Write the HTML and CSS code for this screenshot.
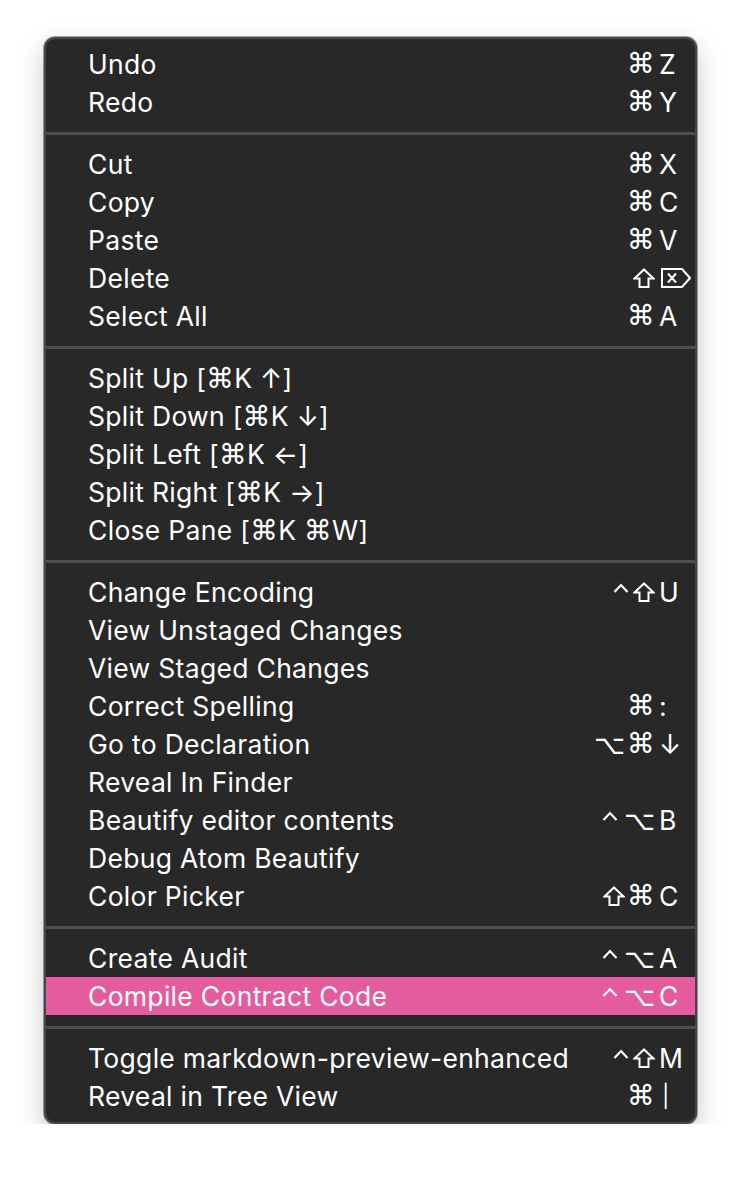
FILE: index.html
```html
<!DOCTYPE html>
<html>
<head>
<meta charset="utf-8">
<link rel="stylesheet" href="styles.css">
</head>
<body>
<div class="menu">
  <div class="row"><span class="label">Undo</span><span class="mods"><span class="cmd">⌘</span></span><span class="key">Z</span></div>
  <div class="row"><span class="label">Redo</span><span class="mods"><span class="cmd">⌘</span></span><span class="key">Y</span></div>
  <div class="sep"></div>
  <div class="row"><span class="label">Cut</span><span class="mods"><span class="cmd">⌘</span></span><span class="key">X</span></div>
  <div class="row"><span class="label">Copy</span><span class="mods"><span class="cmd">⌘</span></span><span class="key">C</span></div>
  <div class="row"><span class="label">Paste</span><span class="mods"><span class="cmd">⌘</span></span><span class="key">V</span></div>
  <div class="row"><span class="label">Delete</span><span class="mods"><svg class="shift" viewBox="0 0 22 20" aria-label="⇧"><path d="M11 1.5 L20.5 10.5 L15.5 10.5 L15.5 19 L6.5 19 L6.5 10.5 L1.5 10.5 Z"/></svg></span><span class="key"><svg class="del" viewBox="0 0 30 20" aria-label="⌦"><path d="M1 1 H21 L29 10 L21 19 H1 Z"/><path d="M7 5.5 L15 14.5 M15 5.5 L7 14.5"/></svg></span></div>
  <div class="row"><span class="label">Select All</span><span class="mods"><span class="cmd">⌘</span></span><span class="key">A</span></div>
  <div class="sep"></div>
  <div class="row"><span class="label">Split Up [<span class="g">⌘</span>K ↑]</span></div>
  <div class="row"><span class="label">Split Down [<span class="g">⌘</span>K ↓]</span></div>
  <div class="row"><span class="label">Split Left [<span class="g">⌘</span>K ←]</span></div>
  <div class="row"><span class="label">Split Right [<span class="g">⌘</span>K →]</span></div>
  <div class="row"><span class="label">Close Pane [<span class="g">⌘</span>K <span class="g">⌘</span>W]</span></div>
  <div class="sep"></div>
  <div class="row"><span class="label">Change Encoding</span><span class="mods"><svg class="ctrl" viewBox="0 0 16 20" aria-label="⌃"><path d="M1.5 10 L8 3 L14.5 10"/></svg><svg class="shift" viewBox="0 0 22 20" aria-label="⇧"><path d="M11 1.5 L20.5 10.5 L15.5 10.5 L15.5 19 L6.5 19 L6.5 10.5 L1.5 10.5 Z"/></svg></span><span class="key">U</span></div>
  <div class="row"><span class="label">View Unstaged Changes</span></div>
  <div class="row"><span class="label">View Staged Changes</span></div>
  <div class="row"><span class="label">Correct Spelling</span><span class="mods"><span class="cmd">⌘</span></span><span class="key">:</span></div>
  <div class="row"><span class="label">Go to Declaration</span><span class="mods"><span class="opt">⌥</span><span class="cmd">⌘</span></span><span class="key">↓</span></div>
  <div class="row"><span class="label">Reveal In Finder</span></div>
  <div class="row"><span class="label">Beautify editor contents</span><span class="mods"><svg class="ctrl" viewBox="0 0 16 20" aria-label="⌃"><path d="M1.5 10 L8 3 L14.5 10"/></svg><span class="opt">⌥</span></span><span class="key">B</span></div>
  <div class="row"><span class="label">Debug Atom Beautify</span></div>
  <div class="row"><span class="label">Color Picker</span><span class="mods"><svg class="shift" viewBox="0 0 22 20" aria-label="⇧"><path d="M11 1.5 L20.5 10.5 L15.5 10.5 L15.5 19 L6.5 19 L6.5 10.5 L1.5 10.5 Z"/></svg><span class="cmd">⌘</span></span><span class="key">C</span></div>
  <div class="sep"></div>
  <div class="row"><span class="label">Create Audit</span><span class="mods"><svg class="ctrl" viewBox="0 0 16 20" aria-label="⌃"><path d="M1.5 10 L8 3 L14.5 10"/></svg><span class="opt">⌥</span></span><span class="key">A</span></div>
  <div class="row active"><span class="label">Compile Contract Code</span><span class="mods"><svg class="ctrl" viewBox="0 0 16 20" aria-label="⌃"><path d="M1.5 10 L8 3 L14.5 10"/></svg><span class="opt">⌥</span></span><span class="key">C</span></div>
  <div class="sep"></div>
  <div class="row"><span class="label">Toggle markdown-preview-enhanced</span><span class="mods"><svg class="ctrl" viewBox="0 0 16 20" aria-label="⌃"><path d="M1.5 10 L8 3 L14.5 10"/></svg><svg class="shift" viewBox="0 0 22 20" aria-label="⇧"><path d="M11 1.5 L20.5 10.5 L15.5 10.5 L15.5 19 L6.5 19 L6.5 10.5 L1.5 10.5 Z"/></svg></span><span class="key">M</span></div>
  <div class="row"><span class="label">Reveal in Tree View</span><span class="mods"><span class="cmd">⌘</span></span><span class="key pipe">|</span></div>
</div>
</body>
</html>
```

FILE: styles.css
```css
html, body {
  margin: 0;
  padding: 0;
  background: #ffffff;
}

body {
  font-family: Inter, "Noto Sans", "DejaVu Sans", sans-serif;
}

.menu {
  box-sizing: border-box;
  margin: 37px 0 0 44px;
  width: 653px;
  padding: 6px 0 7px;
  background: #282828;
  border: 2px solid #464646;
  border-radius: 11px;
  box-shadow: 0 0 0 1px rgba(0, 0, 0, 0.35), 0 10px 28px rgba(0, 0, 0, 0.22);
  color: #ffffff;
  font-size: 26.5px;
  letter-spacing: 0.3px;
}

.row {
  display: grid;
  grid-template-columns: 1fr auto 36px;
  align-items: center;
  height: 38px;
  padding-left: 42px;
  white-space: nowrap;
}

.row.active {
  background: #e45c9d;
}

.label {
  line-height: 38px;
}

.g {
  font-family: "DejaVu Sans", sans-serif;
  font-size: 28px;
  line-height: 1;
  letter-spacing: 0;
}

.mods {
  display: flex;
  align-items: center;
  justify-content: flex-end;
  gap: 2px;
  padding-right: 4px;
  height: 38px;
  font-family: "DejaVu Sans", sans-serif;
  line-height: 1;
  letter-spacing: 0;
}

.cmd {
  font-size: 28px;
}

.opt {
  font-size: 27px;
  margin-left: 2px;
}

.ctrl {
  width: 16px;
  height: 20px;
  fill: none;
  stroke: #ffffff;
  stroke-width: 2.2;
  margin-right: 2px;
}

.shift {
  width: 22px;
  height: 20px;
  fill: none;
  stroke: #ffffff;
  stroke-width: 2;
  stroke-linejoin: miter;
}

.key {
  text-align: left;
  display: flex;
  align-items: center;
  height: 38px;
}

.del {
  width: 30px;
  height: 20px;
  fill: none;
  stroke: #ffffff;
  stroke-width: 2;
  margin-left: 2px;
}

.pipe {
  font-size: 22px;
  padding-left: 3px;
}

.sep {
  height: 3px;
  margin: 11px 0 10px;
  background: #4d4d4d;
}
```
